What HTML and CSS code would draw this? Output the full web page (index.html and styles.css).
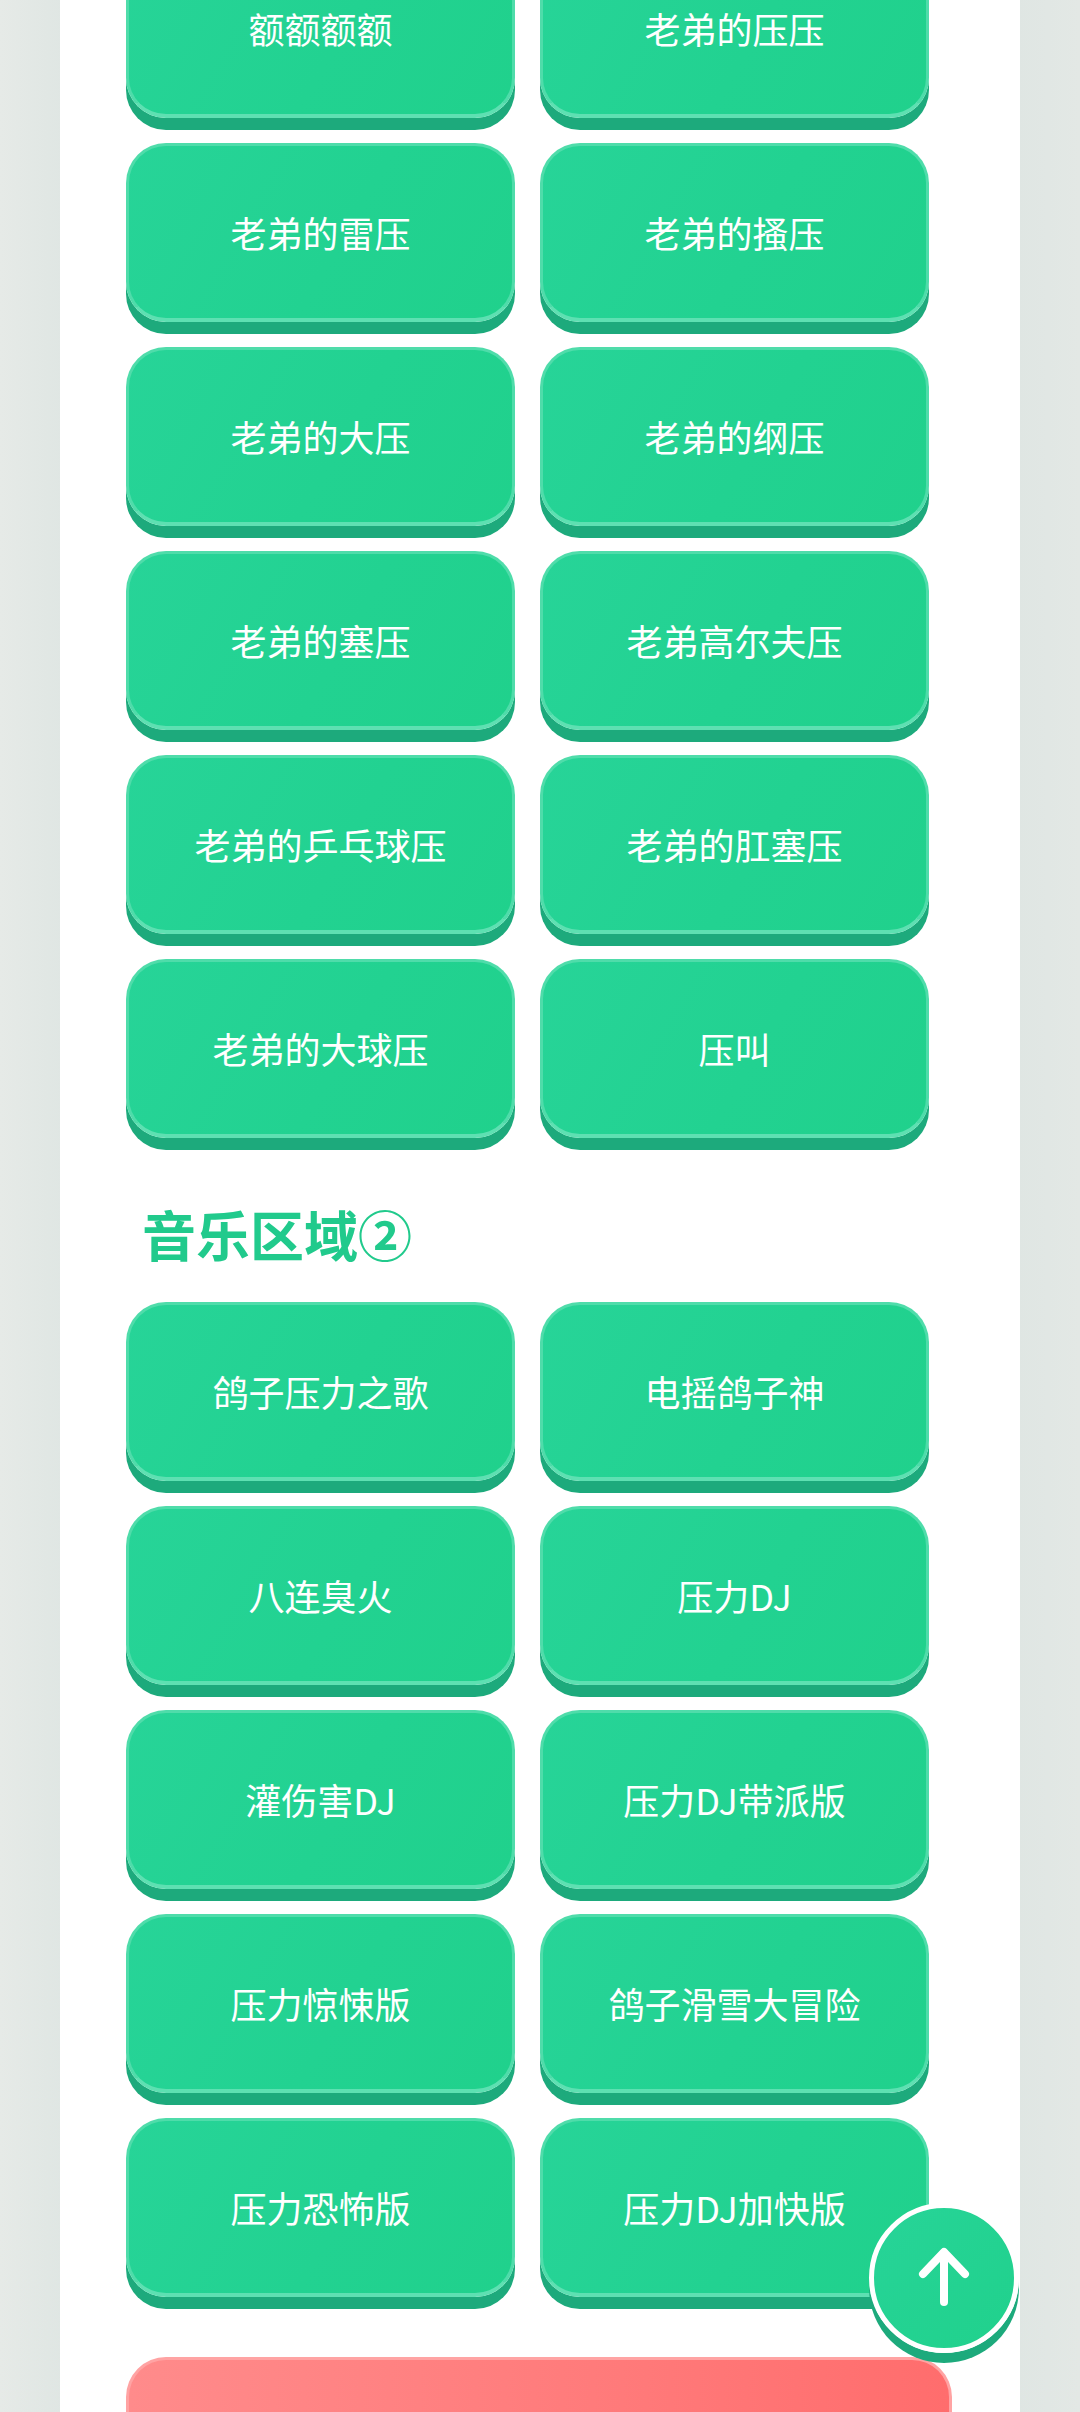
FILE: index.html
```html
<!DOCTYPE html>
<html lang="zh-CN">
<head>
<meta charset="utf-8">
<meta name="viewport" content="width=1080">
<title>鸽子压力</title>
<link rel="stylesheet" href="styles.css">
</head>
<body>
<main class="panel">
  <section class="grid grid-first">
    <button class="sound">额额额额</button>
    <button class="sound">老弟的压压</button>
    <button class="sound">老弟的雷压</button>
    <button class="sound">老弟的搔压</button>
    <button class="sound">老弟的大压</button>
    <button class="sound">老弟的纲压</button>
    <button class="sound">老弟的塞压</button>
    <button class="sound">老弟高尔夫压</button>
    <button class="sound">老弟的乒乓球压</button>
    <button class="sound">老弟的肛塞压</button>
    <button class="sound">老弟的大球压</button>
    <button class="sound">压叫</button>
  </section>
  <h2 class="section-title">音乐区域②</h2>
  <section class="grid">
    <button class="sound">鸽子压力之歌</button>
    <button class="sound">电摇鸽子神</button>
    <button class="sound">八连臭火</button>
    <button class="sound">压力DJ</button>
    <button class="sound">灌伤害DJ</button>
    <button class="sound">压力DJ带派版</button>
    <button class="sound">压力惊悚版</button>
    <button class="sound">鸽子滑雪大冒险</button>
    <button class="sound">压力恐怖版</button>
    <button class="sound">压力DJ加快版</button>
  </section>
  <button class="stop">停止播放</button>
</main>
<button class="to-top" aria-label="返回顶部">
  <svg width="60" height="64" viewBox="-30 -32 60 64" fill="none" stroke="#ffffff" stroke-width="8" stroke-linecap="round" stroke-linejoin="round">
    <path d="M0 24 V-25"/>
    <path d="M-21 -4 L0 -26 L21 -4"/>
  </svg>
</button>
</body>
</html>
```
FILE: styles.css
```css
html, body {
  margin: 0;
  padding: 0;
}
body {
  background: linear-gradient(90deg, #e6eae7 0%, #dfe6e3 6%, #e2e8e5 50%, #dfe6e3 94%, #e3e8e5 100%);
  font-family: "Noto Sans CJK SC", "Noto Sans", sans-serif;
  overflow: hidden;
  height: 2412px;
}
.panel {
  width: 960px;
  margin: 0 auto;
  background: #ffffff;
  min-height: 2412px;
  box-sizing: border-box;
  padding: 0 68px 0 66px;
  overflow: hidden;
}
.grid {
  display: grid;
  grid-template-columns: 389px 389px;
  column-gap: 25px;
  row-gap: 25px;
}
.grid-first {
  margin-top: -61px;
}
.sound {
  height: 179px;
  margin: 0;
  border-radius: 40px;
  border: 3px solid #4fdcaa;
  border-bottom: 4px solid #5ee0b2;
  background: linear-gradient(120deg, #27d498 0%, #22d291 55%, #20d18c 100%);
  box-shadow: 0 12px 0 #1daa7c;
  color: #ffffff;
  font-family: "Noto Sans CJK SC", "Noto Sans", sans-serif;
  font-size: 36px;
  font-weight: 400;
  padding: 0;
  cursor: pointer;
}
.section-title {
  margin: 66px 0 38px 16px;
  font-size: 54px;
  line-height: 60px;
  font-weight: 700;
  color: #21ca8c;
  letter-spacing: 0;
}
.stop {
  display: block;
  width: 826px;
  height: 179px;
  margin-top: 60px;
  border-radius: 40px;
  border: 3px solid #ffa3a3;
  border-bottom: 4px solid #ffa3a3;
  background: linear-gradient(90deg, #ff8b8b 0%, #ff7a7a 60%, #ff6d6d 100%);
  box-shadow: 0 12px 0 #e05a5a;
  color: #ffffff;
  font-family: "Noto Sans CJK SC", "Noto Sans", sans-serif;
  font-size: 40px;
  padding: 0;
}
.to-top {
  position: fixed;
  right: 61px;
  bottom: 59px;
  width: 150px;
  height: 150px;
  border-radius: 50%;
  border: 5px solid #ffffff;
  background: linear-gradient(135deg, #27d498, #20d18c);
  box-shadow: 0 10px 0 #1daa7c;
  display: flex;
  align-items: center;
  justify-content: center;
  padding: 0;
  box-sizing: border-box;
}
```
